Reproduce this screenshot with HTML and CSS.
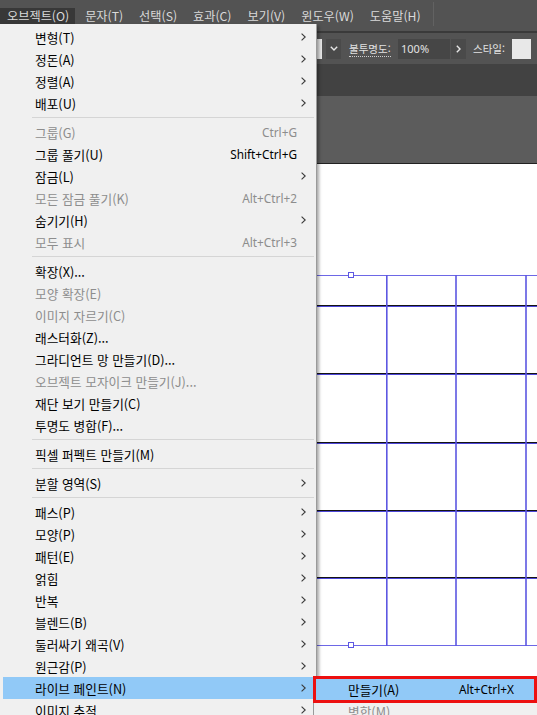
FILE: index.html
```html
<!DOCTYPE html>
<html lang="ko">
<head>
<meta charset="utf-8">
<title>Illustrator 오브젝트 메뉴</title>
<link rel="stylesheet" href="styles.css">
</head>
<body>
<div class="app">
  <div class="menubar">
    <span class="mb-item active">오브젝트(O)</span>
    <span class="mb-item">문자(T)</span>
    <span class="mb-item">선택(S)</span>
    <span class="mb-item">효과(C)</span>
    <span class="mb-item">보기(V)</span>
    <span class="mb-item">윈도우(W)</span>
    <span class="mb-item">도움말(H)</span>
    <span class="mb-sep"></span>
  </div>
  <div class="controlbar">
    <span class="cb-field"></span>
    <span class="cb-btn"><svg width="8" height="5" viewBox="0 0 8 5"><polyline points="0.8,0.8 4,4 7.2,0.8" fill="none" stroke="#e6e6e6" stroke-width="1.4"/></svg></span>
    <span class="cb-label"><span class="dotted">불투명도:</span></span>
    <span class="cb-input">100%</span>
    <span class="cb-btn"><svg width="5" height="8" viewBox="0 0 5 8"><polyline points="0.8,0.8 4,4 0.8,7.2" fill="none" stroke="#e6e6e6" stroke-width="1.4"/></svg></span>
    <span class="cb-label2">스타일:</span>
    <span class="cb-swatch"></span>
  </div>
  <div class="tabbar"></div>
  <div class="pasteboard"></div>
  <div class="artboard">
    <svg class="grid" width="537" height="551" viewBox="0 0 537 551">
      <rect x="0" y="111" width="537" height="1" fill="#6d67e6"/>
      <rect x="0" y="141" width="537" height="1" fill="#141414"/>
      <rect x="0" y="142" width="537" height="1" fill="#4d47d8"/>
      <rect x="0" y="209" width="537" height="1" fill="#141414"/>
      <rect x="0" y="210" width="537" height="1" fill="#4d47d8"/>
      <rect x="0" y="278" width="537" height="1" fill="#141414"/>
      <rect x="0" y="279" width="537" height="1" fill="#4d47d8"/>
      <rect x="0" y="346" width="537" height="1" fill="#141414"/>
      <rect x="0" y="347" width="537" height="1" fill="#4d47d8"/>
      <rect x="0" y="413" width="537" height="1" fill="#141414"/>
      <rect x="0" y="414" width="537" height="1" fill="#4d47d8"/>
      <rect x="0" y="481" width="537" height="1" fill="#6d67e6"/>
      <rect x="386" y="111" width="1.6" height="371" fill="#5d57e2"/>
      <rect x="455.2" y="111" width="1.6" height="371" fill="#5d57e2"/>
      <rect x="525.2" y="111" width="1.6" height="371" fill="#5d57e2"/>
      <rect x="348.5" y="108.5" width="5" height="5" fill="#ffffff" stroke="#5d57e2" stroke-width="1"/>
      <rect x="348.5" y="478.5" width="5" height="5" fill="#ffffff" stroke="#5d57e2" stroke-width="1"/>
    </svg>
  </div>
</div>

<div class="menu">
  <div class="mi"><span class="lbl">변형(T)</span><span class="sc"></span><span class="arr"><svg width="5" height="8" viewBox="0 0 5 8"><polyline points="0.6,0.6 4.2,4 0.6,7.4"/></svg></span></div>
  <div class="mi"><span class="lbl">정돈(A)</span><span class="sc"></span><span class="arr"><svg width="5" height="8" viewBox="0 0 5 8"><polyline points="0.6,0.6 4.2,4 0.6,7.4"/></svg></span></div>
  <div class="mi"><span class="lbl">정렬(A)</span><span class="sc"></span><span class="arr"><svg width="5" height="8" viewBox="0 0 5 8"><polyline points="0.6,0.6 4.2,4 0.6,7.4"/></svg></span></div>
  <div class="mi"><span class="lbl">배포(U)</span><span class="sc"></span><span class="arr"><svg width="5" height="8" viewBox="0 0 5 8"><polyline points="0.6,0.6 4.2,4 0.6,7.4"/></svg></span></div>
  <div class="msep"></div>
  <div class="mi off"><span class="lbl">그룹(G)</span><span class="sc">Ctrl+G</span><span class="arr"></span></div>
  <div class="mi"><span class="lbl">그룹 풀기(U)</span><span class="sc">Shift+Ctrl+G</span><span class="arr"></span></div>
  <div class="mi"><span class="lbl">잠금(L)</span><span class="sc"></span><span class="arr"><svg width="5" height="8" viewBox="0 0 5 8"><polyline points="0.6,0.6 4.2,4 0.6,7.4"/></svg></span></div>
  <div class="mi off"><span class="lbl">모든 잠금 풀기(K)</span><span class="sc">Alt+Ctrl+2</span><span class="arr"></span></div>
  <div class="mi"><span class="lbl">숨기기(H)</span><span class="sc"></span><span class="arr"><svg width="5" height="8" viewBox="0 0 5 8"><polyline points="0.6,0.6 4.2,4 0.6,7.4"/></svg></span></div>
  <div class="mi off"><span class="lbl">모두 표시</span><span class="sc">Alt+Ctrl+3</span><span class="arr"></span></div>
  <div class="msep"></div>
  <div class="mi"><span class="lbl">확장(X)...</span><span class="sc"></span><span class="arr"></span></div>
  <div class="mi off"><span class="lbl">모양 확장(E)</span><span class="sc"></span><span class="arr"></span></div>
  <div class="mi off"><span class="lbl">이미지 자르기(C)</span><span class="sc"></span><span class="arr"></span></div>
  <div class="mi"><span class="lbl">래스터화(Z)...</span><span class="sc"></span><span class="arr"></span></div>
  <div class="mi"><span class="lbl">그라디언트 망 만들기(D)...</span><span class="sc"></span><span class="arr"></span></div>
  <div class="mi off"><span class="lbl">오브젝트 모자이크 만들기(J)...</span><span class="sc"></span><span class="arr"></span></div>
  <div class="mi"><span class="lbl">재단 보기 만들기(C)</span><span class="sc"></span><span class="arr"></span></div>
  <div class="mi"><span class="lbl">투명도 병합(F)...</span><span class="sc"></span><span class="arr"></span></div>
  <div class="msep"></div>
  <div class="mi"><span class="lbl">픽셀 퍼펙트 만들기(M)</span><span class="sc"></span><span class="arr"></span></div>
  <div class="msep"></div>
  <div class="mi"><span class="lbl">분할 영역(S)</span><span class="sc"></span><span class="arr"><svg width="5" height="8" viewBox="0 0 5 8"><polyline points="0.6,0.6 4.2,4 0.6,7.4"/></svg></span></div>
  <div class="msep"></div>
  <div class="mi"><span class="lbl">패스(P)</span><span class="sc"></span><span class="arr"><svg width="5" height="8" viewBox="0 0 5 8"><polyline points="0.6,0.6 4.2,4 0.6,7.4"/></svg></span></div>
  <div class="mi"><span class="lbl">모양(P)</span><span class="sc"></span><span class="arr"><svg width="5" height="8" viewBox="0 0 5 8"><polyline points="0.6,0.6 4.2,4 0.6,7.4"/></svg></span></div>
  <div class="mi"><span class="lbl">패턴(E)</span><span class="sc"></span><span class="arr"><svg width="5" height="8" viewBox="0 0 5 8"><polyline points="0.6,0.6 4.2,4 0.6,7.4"/></svg></span></div>
  <div class="mi"><span class="lbl">얽힘</span><span class="sc"></span><span class="arr"><svg width="5" height="8" viewBox="0 0 5 8"><polyline points="0.6,0.6 4.2,4 0.6,7.4"/></svg></span></div>
  <div class="mi"><span class="lbl">반복</span><span class="sc"></span><span class="arr"><svg width="5" height="8" viewBox="0 0 5 8"><polyline points="0.6,0.6 4.2,4 0.6,7.4"/></svg></span></div>
  <div class="mi"><span class="lbl">블렌드(B)</span><span class="sc"></span><span class="arr"><svg width="5" height="8" viewBox="0 0 5 8"><polyline points="0.6,0.6 4.2,4 0.6,7.4"/></svg></span></div>
  <div class="mi"><span class="lbl">둘러싸기 왜곡(V)</span><span class="sc"></span><span class="arr"><svg width="5" height="8" viewBox="0 0 5 8"><polyline points="0.6,0.6 4.2,4 0.6,7.4"/></svg></span></div>
  <div class="mi"><span class="lbl">원근감(P)</span><span class="sc"></span><span class="arr"><svg width="5" height="8" viewBox="0 0 5 8"><polyline points="0.6,0.6 4.2,4 0.6,7.4"/></svg></span></div>
  <div class="mi hl"><span class="lbl">라이브 페인트(N)</span><span class="sc"></span><span class="arr"><svg width="5" height="8" viewBox="0 0 5 8"><polyline points="0.6,0.6 4.2,4 0.6,7.4"/></svg></span></div>
  <div class="mi"><span class="lbl">이미지 추적</span><span class="sc"></span><span class="arr"><svg width="5" height="8" viewBox="0 0 5 8"><polyline points="0.6,0.6 4.2,4 0.6,7.4"/></svg></span></div>
</div>

<div class="submenu">
  <div class="si hl"><span class="lbl">만들기(A)</span><span class="sc">Alt+Ctrl+X</span></div>
  <div class="si off"><span class="lbl">병합(M)</span><span class="sc"></span></div>
</div>
<div class="redbox"></div>
</body>
</html>
```

FILE: styles.css
```css
html, body {
  margin: 0;
  padding: 0;
}

body {
  width: 537px;
  height: 715px;
  overflow: hidden;
  position: relative;
  background: #5c5c5c;
  font-family: "Noto Sans CJK KR", "Noto Sans", sans-serif;
}

.app {
  display: flex;
  flex-direction: column;
  height: 715px;
}

/* top menu bar */
.menubar {
  box-sizing: border-box;
  height: 33px;
  padding-top: 8px;
  display: flex;
  align-items: flex-start;
  background: #535353;
  border-bottom: 2px solid #3a3a3a;
  font-size: 12.2px;
  color: #dadada;
}

.mb-item {
  height: 16px;
  line-height: 16px;
  padding: 0 8px;
  white-space: nowrap;
}

.mb-item.active {
  background: #383838;
  padding-left: 7px;
  padding-right: 6px;
  margin-right: 2px;
}

.mb-sep {
  width: 1px;
  height: 24px;
  margin-top: -6px;
  margin-left: 4px;
  background: #626262;
}

/* control bar */
.controlbar {
  height: 31px;
  display: flex;
  align-items: center;
  padding-left: 262px;
  background: #535353;
  font-size: 10.5px;
  color: #e2e2e2;
  white-space: nowrap;
}

.cb-field {
  width: 60px;
  height: 20px;
  background: #e6e6e6;
}

.cb-btn {
  width: 15px;
  height: 20px;
  margin-left: 4px;
  background: #4a4a4a;
  display: flex;
  align-items: center;
  justify-content: center;
}

.cb-label {
  width: 44px;
  margin-left: 8px;
  line-height: 14px;
}

.dotted {
  border-bottom: 1px dotted #cfcfcf;
}

.cb-input {
  box-sizing: border-box;
  width: 52px;
  height: 20px;
  margin-left: 5px;
  padding-left: 3px;
  background: #464646;
  font-family: "Noto Sans", sans-serif;
  font-size: 11px;
  line-height: 20px;
}

.cb-input + .cb-btn {
  margin-left: 1px;
}

.cb-label2 {
  width: 34px;
  margin-left: 7px;
  line-height: 14px;
}

.cb-swatch {
  width: 19px;
  height: 20px;
  margin-left: 5px;
  background: #e8e8e8;
}

.tabbar {
  height: 32px;
  background: #424242;
}

.pasteboard {
  height: 67px;
  background: #5c5c5c;
}

.artboard {
  flex: 1;
  background: #ffffff;
  border-top: 1px solid #222222;
}

.grid {
  display: block;
}

/* dropdown menu */
.menu {
  position: absolute;
  left: 0;
  top: 24px;
  width: 317px;
  box-sizing: border-box;
  padding: 2px 1px 0 3px;
  background: #f0f0f0;
  border-right: 1px solid #9a9a9a;
  box-shadow: 2px 2px 3px rgba(0, 0, 0, 0.35);
  font-size: 12.7px;
  color: #000000;
}

.mi {
  display: grid;
  grid-template-columns: 1fr auto 18px;
  align-items: center;
  height: 22px;
  padding-left: 32px;
  white-space: nowrap;
}

.sc {
  font-family: "Noto Sans", sans-serif;
  font-size: 11.8px;
}

.mi.off {
  color: #8d8d8d;
}

.mi.hl {
  background: #91c9f7;
}

.arr {
  display: flex;
  align-items: center;
  padding-left: 4px;
  height: 22px;
}

.arr polyline {
  fill: none;
  stroke: #3a3a3a;
  stroke-width: 1.1;
}

.msep {
  height: 1px;
  margin: 3px 1px 3px 29px;
  background: #d5d5d5;
}

/* submenu */
.submenu {
  position: absolute;
  left: 313px;
  top: 676px;
  width: 240px;
  box-sizing: border-box;
  padding-top: 1px;
  background: #f0f0f0;
  border: 1px solid #9a9a9a;
  font-size: 12.7px;
  color: #000000;
}

.si {
  display: grid;
  grid-template-columns: 111px auto;
  align-items: center;
  height: 22px;
  padding-left: 34px;
  white-space: nowrap;
}

.si.hl {
  background: #91c9f7;
}

.si.off {
  color: #8d8d8d;
}

.redbox {
  position: absolute;
  left: 313px;
  top: 676px;
  width: 224px;
  height: 27px;
  box-sizing: border-box;
  border: 3px solid #ec1010;
}
```
